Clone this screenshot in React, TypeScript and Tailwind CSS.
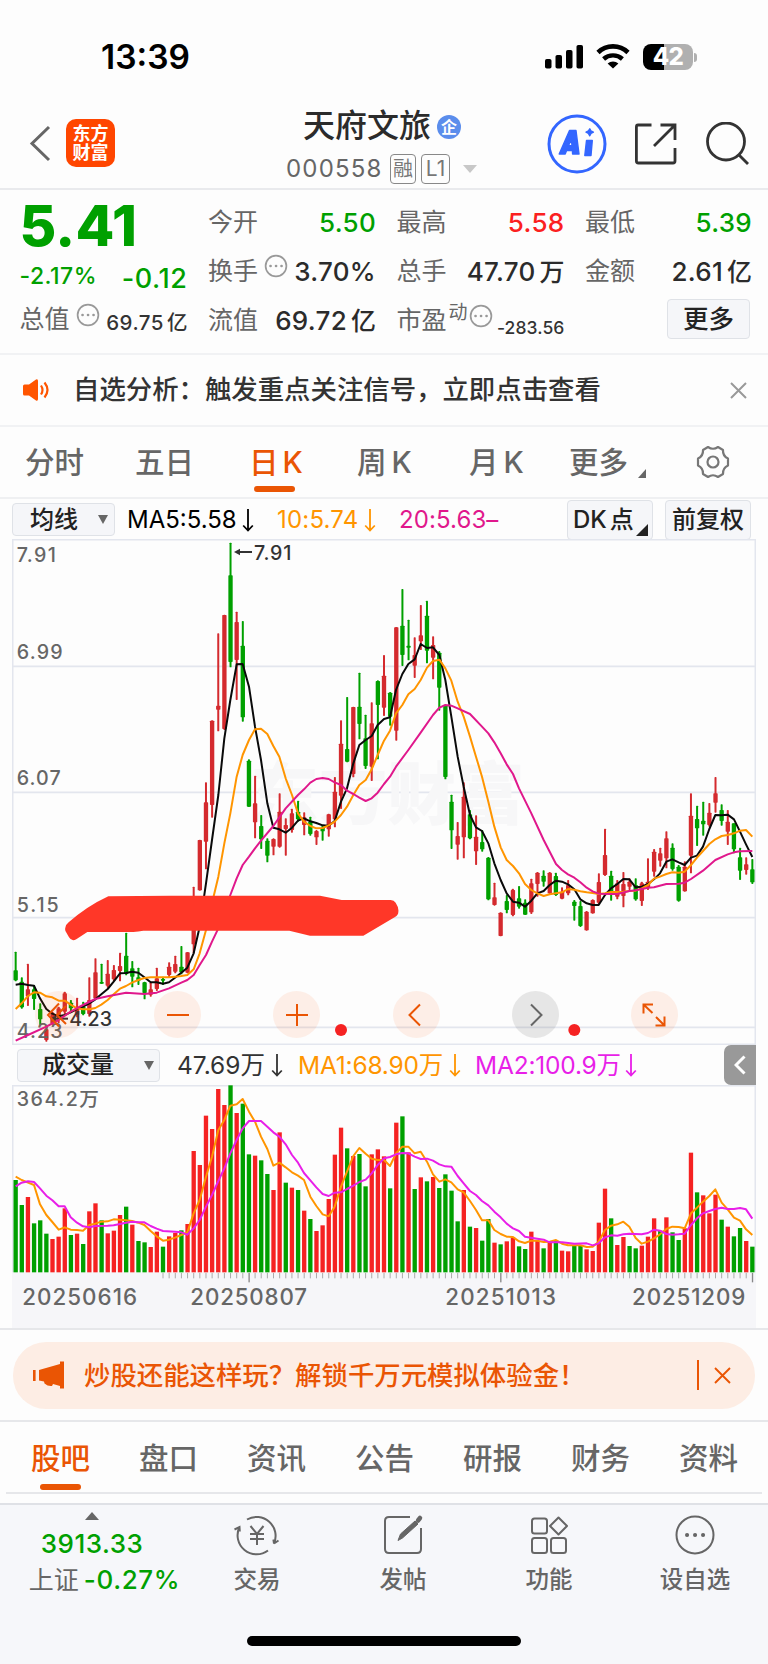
import type { ReactNode } from 'react';

type Candle = [string, number, number, number, number];

// color, high, body top, body bottom, low
const candles: Candle[] = [
  ['g', 1265, 1321, 1351, 1354], ['g', 1342, 1355, 1432, 1436], ['r', 1301, 1378, 1399, 1428], ['g', 1365, 1378, 1407, 1440],
  ['g', 1420, 1437, 1468, 1485], ['r', 1490, 1498, 1530, 1535], ['r', 1445, 1450, 1480, 1485], ['r', 1430, 1435, 1470, 1480],
  ['r', 1385, 1390, 1445, 1452], ['g', 1410, 1418, 1435, 1445], ['r', 1403, 1432, 1455, 1462], ['g', 1415, 1430, 1452, 1456],
  ['r', 1342, 1410, 1452, 1460], ['r', 1285, 1327, 1405, 1410], ['g', 1301, 1356, 1361, 1362], ['r', 1290, 1331, 1367, 1373],
  ['r', 1305, 1320, 1348, 1354], ['r', 1268, 1308, 1323, 1354], ['g', 1208, 1277, 1332, 1336], ['g', 1293, 1315, 1340, 1372],
  ['g', 1313, 1342, 1352, 1365], ['g', 1355, 1357, 1389, 1408], ['r', 1358, 1378, 1394, 1400], ['r', 1313, 1345, 1377, 1383],
  ['g', 1340, 1347, 1352, 1365], ['r', 1297, 1310, 1335, 1342], ['r', 1277, 1302, 1325, 1330], ['g', 1248, 1310, 1327, 1333],
  ['r', 1266, 1267, 1328, 1330], ['r', 1070, 1180, 1243, 1270], ['r', 929, 930, 1081, 1082], ['r', 757, 817, 935, 1018],
  ['r', 571, 572, 825, 863], ['r', 310, 527, 539, 604], ['r', 254, 255, 597, 600], ['g', 38, 136, 396, 412],
  ['r', 245, 276, 390, 510], ['g', 273, 347, 562, 575], ['g', 688, 692, 830, 831], ['r', 737, 820, 877, 925],
  ['g', 855, 888, 928, 957], ['g', 925, 932, 977, 997], ['r', 925, 927, 950, 976], ['r', 790, 845, 950, 953],
  ['r', 865, 885, 897, 977], ['r', 836, 850, 900, 908], ['g', 812, 845, 868, 875], ['r', 847, 862, 885, 916],
  ['g', 860, 875, 912, 917], ['r', 900, 903, 922, 945], ['g', 887, 893, 904, 932], ['r', 851, 853, 898, 920],
  ['r', 741, 785, 868, 892], ['r', 571, 641, 797, 837], ['g', 501, 657, 695, 697], ['r', 530, 531, 732, 742],
  ['g', 428, 530, 582, 628], ['g', 554, 625, 708, 717], ['r', 517, 580, 710, 753], ['g', 451, 453, 525, 688],
  ['r', 375, 437, 533, 558], ['g', 486, 488, 560, 587], ['r', 291, 292, 602, 632], ['g', 177, 287, 375, 408],
  ['g', 269, 347, 353, 391], ['r', 322, 375, 407, 444], ['r', 225, 316, 334, 360], ['g', 212, 257, 362, 400],
  ['r', 319, 345, 383, 448], ['g', 363, 368, 473, 542], ['g', 525, 527, 741, 748], ['g', 794, 815, 901, 957],
  ['r', 876, 918, 944, 989], ['r', 757, 800, 922, 985], ['g', 840, 853, 925, 928], ['r', 856, 920, 964, 1005],
  ['g', 900, 936, 958, 965], ['g', 981, 983, 1108, 1111], ['r', 1058, 1102, 1125, 1127], ['r', 1147, 1148, 1218, 1219],
  ['g', 1095, 1113, 1140, 1150], ['r', 1076, 1080, 1155, 1159], ['g', 1068, 1105, 1130, 1136], ['g', 1108, 1118, 1154, 1155],
  ['r', 1046, 1060, 1147, 1152], ['r', 1026, 1028, 1062, 1100], ['g', 1021, 1037, 1055, 1070], ['r', 1026, 1028, 1090, 1092],
  ['g', 1028, 1038, 1095, 1098], ['r', 1072, 1085, 1106, 1108], ['r', 1050, 1065, 1090, 1096], ['g', 1110, 1115, 1128, 1172],
  ['g', 1113, 1128, 1188, 1191], ['r', 1143, 1145, 1201, 1202], ['r', 1108, 1110, 1150, 1151], ['r', 1030, 1056, 1118, 1125],
  ['r', 896, 975, 1035, 1038], ['g', 1022, 1037, 1090, 1112], ['r', 1050, 1060, 1100, 1108], ['r', 1026, 1062, 1098, 1132],
  ['r', 1045, 1055, 1070, 1080], ['g', 1045, 1065, 1108, 1112], ['r', 1055, 1060, 1113, 1128], ['r', 985, 1055, 1072, 1080],
  ['r', 957, 965, 1025, 1040], ['r', 953, 970, 992, 1010], ['r', 904, 925, 985, 1015], ['g', 940, 953, 1017, 1022],
  ['g', 1005, 1010, 1112, 1115], ['r', 994, 1010, 1084, 1085], ['r', 790, 857, 977, 1030], ['g', 827, 867, 895, 948],
  ['g', 815, 872, 883, 917], ['r', 819, 848, 885, 890], ['r', 741, 790, 818, 848], ['g', 823, 840, 873, 887],
  ['r', 840, 875, 905, 945], ['g', 880, 880, 958, 970], ['g', 953, 982, 1022, 1050], ['r', 982, 1003, 1020, 1034],
  ['g', 987, 1018, 1057, 1062],
];

const volumes =
  'g315 g390 r366 g445 g436 g476 r492 r485 r400 g480 r476 g507 r409 r385 g436 r475 r467 r420 g395 r449 g498 g502 r516 r470 g515 r484 r474 g466 r447 r228 r270 r122 r162 r42 r90 g31 r114 g86 g238 r242 g256 g297 r345 r172 g323 r338 g345 r407 g432 r468 r451 r372 r239 r158 g220 r243 g237 g334 r238 r223 r244 g340 r143 g124 r232 g342 r307 g319 r306 g339 g298 g347 g439 r345 g455 r459 g497 g432 r503 g508 r499 r487 g514 g522 r470 r498 g520 r500 g495 r527 r529 g510 g510 r523 r528 r443 r341 g430 r510 r486 g513 g520 r512 r485 r430 g467 r427 g472 g495 r460 r233 g352 r361 r415 r359 g434 r455 g484 g459 r498 g515'.split(' ');

const ma5 =
  '47,1364 65,1361 84,1365 102,1367 120,1405 139,1437 157,1451 176,1459 194,1455 212,1447 231,1437 249,1430 268,1420 286,1408 304,1393 323,1377 341,1355 360,1330 378,1329 396,1325 415,1328 433,1342 452,1357 470,1357 489,1361 507,1357 525,1343 544,1328 562,1313 581,1270 599,1190 618,1060 636,930 655,795 673,625 691,510 710,403 728,402 747,470 765,590 783,690 802,820 820,893 838,898 857,908 876,893 894,872 912,865 931,874 949,879 968,886 986,887 1004,873 1023,815 1041,775 1060,700 1078,645 1097,630 1115,618 1133,585 1152,567 1170,562 1188,480 1207,432 1225,402 1244,388 1262,342 1281,354 1299,352 1318,375 1336,450 1354,560 1373,680 1391,770 1410,855 1428,892 1446,903 1465,940 1483,1000 1502,1050 1520,1090 1539,1115 1557,1118 1575,1130 1594,1112 1612,1090 1631,1083 1649,1065 1668,1052 1686,1055 1704,1063 1723,1078 1741,1108 1760,1120 1778,1125 1796,1125 1815,1095 1833,1075 1852,1062 1870,1047 1888,1048 1907,1072 1925,1070 1944,1062 1962,1048 1980,1030 1999,995 2017,988 2036,997 2054,1005 2073,983 2091,977 2109,950 2128,897 2146,855 2165,856 2183,854 2202,868 2220,905 2238,943 2257,981';
const ma10 =
  '47,1437 65,1420 84,1398 102,1387 120,1388 139,1399 157,1402 176,1412 194,1412 212,1424 231,1435 249,1438 268,1438 286,1434 304,1424 323,1410 341,1393 360,1376 378,1368 396,1358 415,1350 433,1344 452,1342 470,1342 489,1342 507,1342 525,1340 544,1338 562,1335 581,1318 599,1270 618,1200 636,1120 655,1040 673,940 691,850 710,740 728,675 747,630 765,598 783,596 802,612 820,648 838,680 857,745 876,795 894,850 912,875 931,888 949,895 968,894 986,886 1004,875 1023,855 1041,830 1060,795 1078,765 1097,750 1115,718 1133,675 1152,632 1170,602 1188,550 1207,525 1225,493 1244,477 1262,450 1281,413 1299,393 1318,389 1336,415 1354,452 1373,515 1391,560 1410,620 1428,680 1446,740 1465,815 1483,890 1502,952 1520,990 1539,1008 1557,1030 1575,1062 1594,1080 1612,1090 1631,1098 1649,1093 1668,1090 1686,1087 1704,1077 1723,1079 1741,1084 1760,1087 1778,1089 1796,1092 1815,1090 1833,1086 1852,1086 1870,1085 1888,1083 1907,1082 1925,1075 1944,1065 1962,1046 1980,1040 1999,1032 2017,1027 2036,1028 2054,1025 2073,1005 2091,983 2109,963 2128,942 2146,928 2165,918 2183,915 2202,910 2220,902 2238,900 2257,920';
const ma20 =
  '47,1532 84,1515 139,1490 176,1470 212,1445 249,1425 286,1407 323,1399 378,1388 433,1392 470,1388 507,1375 544,1358 562,1350 581,1335 599,1305 618,1275 636,1235 655,1195 673,1140 691,1095 710,1045 728,1005 747,980 765,955 783,932 820,888 857,835 894,795 912,778 931,758 949,747 968,744 986,747 1004,757 1023,765 1041,782 1060,792 1078,803 1097,813 1115,805 1133,788 1152,762 1170,740 1188,710 1225,660 1262,608 1299,555 1318,533 1336,525 1354,527 1373,535 1410,552 1446,590 1465,610 1483,637 1502,670 1520,703 1539,732 1557,775 1594,850 1631,930 1668,1002 1686,1020 1704,1033 1723,1043 1741,1057 1760,1073 1778,1084 1796,1091 1833,1092 1852,1092 1888,1083 1907,1081 1944,1073 1962,1072 1999,1062 2036,1061 2054,1058 2073,1047 2109,1022 2146,990 2183,973 2202,967 2220,964 2257,963';
const volMa1 =
  '47,305 65,315 84,323 102,330 120,388 139,420 157,441 176,464 194,457 212,464 231,465 249,467 268,450 286,446 304,440 323,439 341,433 360,434 378,436 396,438 415,443 433,450 452,468 470,484 489,497 507,494 525,488 544,480 562,472 581,415 599,375 618,305 636,245 655,165 673,135 691,92 710,88 728,72 747,110 765,140 783,185 802,222 820,272 838,263 857,277 876,292 894,302 912,315 931,365 949,393 968,418 986,424 1004,395 1023,335 1041,290 1060,243 1078,219 1097,236 1115,251 1133,255 1152,255 1170,273 1188,235 1207,215 1225,215 1244,235 1262,230 1281,260 1299,298 1318,320 1336,313 1354,322 1373,343 1391,352 1410,378 1428,405 1446,436 1465,436 1483,465 1502,477 1520,485 1539,486 1557,499 1575,504 1594,497 1612,497 1631,501 1649,500 1668,495 1686,506 1704,511 1723,511 1741,511 1760,516 1778,515 1796,500 1815,465 1833,452 1852,448 1870,440 1888,455 1907,489 1925,506 1944,500 1962,490 1980,478 1999,462 2017,455 2036,456 2054,460 2073,415 2091,398 2109,380 2128,363 2146,343 2165,383 2183,403 2202,428 2220,437 2238,463 2257,480';
const volMa2 =
  '47,334 65,323 84,319 102,321 120,340 139,362 157,376 176,394 194,394 212,427 231,443 249,454 268,457 286,453 323,452 341,451 360,447 378,443 396,440 415,442 433,442 452,453 470,461 489,468 525,470 544,472 562,479 581,460 599,435 618,395 636,360 655,318 673,280 691,235 710,195 728,160 747,138 783,138 802,155 820,172 838,185 857,208 876,240 894,263 912,294 931,316 949,337 968,357 986,363 1004,353 1023,352 1041,342 1060,332 1078,321 1097,314 1115,295 1133,270 1152,250 1170,246 1188,238 1207,234 1225,235 1244,245 1262,252 1281,251 1299,257 1318,268 1336,274 1354,275 1373,303 1391,325 1410,348 1428,360 1446,378 1465,391 1483,410 1502,427 1520,446 1539,460 1557,468 1575,485 1612,491 1631,494 1649,502 1686,502 1723,506 1760,505 1778,511 1796,505 1815,487 1833,481 1852,482 1870,478 1888,476 1925,478 1944,474 1962,464 1980,467 1999,477 2017,479 2036,478 2054,476 2073,450 2091,430 2109,415 2128,408 2146,402 2165,398 2183,402 2202,402 2220,399 2238,403 2257,431';

const barX = (i: number) => 47 + i * 18.417;

function StatusBar() {
  return (
    <div className="flex h-[96px] items-start justify-between pl-[101px] pr-[71px] pt-[43px]">
      <span className="text-[33.5px] font-semibold leading-[28px] text-black">13:39</span>
      <div className="flex">
        <svg width="40" height="28" viewBox="0 0 40 28" className="mr-[11px]">
          <rect x="0" y="16" width="6.5" height="9.5" rx="1.8" />
          <rect x="10.5" y="12" width="6.5" height="13.5" rx="1.8" />
          <rect x="21" y="7" width="6.5" height="18.5" rx="1.8" />
          <rect x="31.5" y="2" width="6.5" height="23.5" rx="1.8" />
        </svg>
        <svg width="34" height="28" viewBox="0 0 34 28" className="mr-[13px]">
          <path d="M2 9.5 A21.5 21.5 0 0 1 32 9.5" fill="none" stroke="#000" strokeWidth="4.6" />
          <path d="M7.6 16 A14 14 0 0 1 26.4 16" fill="none" stroke="#000" strokeWidth="4.4" />
          <path d="M17 25.6 L11.6 20.6 A8 8 0 0 1 22.4 20.6 Z" />
        </svg>
        <div className="flex items-center">
          <div className="flex h-[26px] w-[50px] items-center justify-center rounded-[8px] bg-[linear-gradient(90deg,#000_42%,#b0b0b0_42%)] text-[24px] font-extrabold leading-none tracking-[-0.6px] text-white">
            42
          </div>
          <div className="ml-[1px] h-[9px] w-[3px] rounded-r-full bg-[#b0b0b0]" />
        </div>
      </div>
    </div>
  );
}

function Header() {
  return (
    <div className="relative flex h-[94px] items-start border-b-2 border-[#e9eaed]">
      <svg width="24" height="38" viewBox="0 0 24 38" className="ml-[28px] mt-[29px]" fill="none" stroke="#666" strokeWidth="3">
        <path d="M21 2 L4 18.5 L21 35" />
      </svg>
      <div className="ml-[14px] mt-[23px] flex h-[48px] w-[49px] flex-col items-center justify-center rounded-[10px] bg-[#ff4600] text-[18px] font-bold leading-[19.5px] text-white">
        <span>东方</span>
        <span>财富</span>
      </div>
      <div className="absolute left-[286px] top-[9px] w-[200px]">
        <div className="flex h-[42px] items-center pl-[17px]">
          <span className="text-[32px] font-medium text-[#2b2b2b]">天府文旅</span>
          <span className="ml-[6px] mt-[1px] flex h-[24px] w-[24px] items-center justify-center rounded-full bg-[#5b8dec] text-[16px] font-bold text-white">企</span>
        </div>
        <div className="mt-[5px] flex h-[34px] items-center">
          <span className="w-[104px] text-[24px] tracking-[1.2px] text-[#666]">000558</span>
          <span className="flex h-[30px] w-[26px] items-center justify-center rounded-[4px] border-[1.5px] border-[#888] text-[20px] text-[#777]">融</span>
          <span className="ml-[5px] flex h-[30px] w-[29px] items-center justify-center rounded-[4px] border-[1.5px] border-[#888] text-[21px] text-[#777]">L1</span>
          <svg width="14" height="8" viewBox="0 0 14 8" className="ml-[13px]">
            <path d="M0 0 H14 L7 8 Z" fill="#c8c8c8" />
          </svg>
        </div>
      </div>
      <div className="ml-auto mr-[17px] mt-[17.5px] flex items-center">
        <svg width="60" height="60" viewBox="0 0 60 60" className="mr-[27px]">
          <circle cx="30" cy="30" r="28" fill="none" stroke="#3366ff" strokeWidth="3" />
          <g fill="#3366ff" stroke="#3366ff" strokeWidth="1.4" strokeLinejoin="round">
            <path fillRule="evenodd" d="M22.5 16.5 H29 L32 40 H25.6 L25.4 36.5 H19.6 L18.2 40 H12.2 Z M24.4 25.5 L21.4 31.8 H25 Z" />
            <path d="M39.5 26.5 H45.3 L44 41.5 H37.8 Z" />
            <path d="M42.8 14.8 L44 17 L46.4 18.2 L44 19.4 L42.8 21.8 L41.4 19.4 L39 18.2 L41.4 17 Z" />
          </g>
        </svg>
        <svg width="44" height="44" viewBox="0 0 44 44" className="mr-[27px]" fill="none" stroke="#333" strokeWidth="2.8">
          <path d="M17.5 3 H4 Q2.4 3 2.4 5 V39 Q2.4 41 4.4 41 H39 Q41 41 41 39 V26" />
          <path d="M26.5 3 H41 V18 M41 3 L20 24" />
        </svg>
        <svg width="46" height="46" viewBox="0 0 46 46" className="mt-[2px]" fill="none" stroke="#333" strokeWidth="2.8">
          <circle cx="21" cy="19.5" r="18.5" />
          <path d="M33.5 32.5 L43 42" />
        </svg>
      </div>
    </div>
  );
}

function InfoDot() {
  return (
    <svg width="24" height="24" viewBox="0 0 24 24" fill="none" stroke="#999" strokeWidth="1.7">
      <circle cx="12" cy="12" r="10.4" />
      <path d="M6.5 12h.1M12 12h.1M17.5 12h.1" strokeWidth="2.6" strokeLinecap="round" />
    </svg>
  );
}

function Stat({ label, value, unit, color = 'text-[#2b2b2b]', dot }: { label: string; value: string; unit?: string; color?: string; dot?: boolean }) {
  return (
    <div className="relative flex h-[49px] items-center justify-between text-[25px] text-[#666]">
      <span>{label}</span>
      {dot && <span className="absolute left-[56px] top-[7px]"><InfoDot /></span>}
      <span className={`text-[26px] font-medium tracking-[0.3px] ${color}`}>
        {value}
        {unit && <span className="ml-[4px] text-[25px] tracking-normal">{unit}</span>}
      </span>
    </div>
  );
}

function Quote() {
  return (
    <div className="grid h-[165px] grid-cols-[168px_168px_168px_167px] gap-x-[20.5px] border-b-2 border-[#f1f2f4] pl-[19.5px] pt-[8px]">
      <div>
        <div className="h-[57px] text-[56.5px] font-extrabold leading-[56px] tracking-[0.2px] text-[#00a000]">5.41</div>
        <div className="flex h-[40px] items-baseline justify-between font-medium text-[#00a000]">
          <span className="text-[23px] leading-[36px] tracking-[0.5px]">-2.17%</span>
          <span className="relative top-[4px] text-[27px] tracking-[0.6px]">-0.12</span>
        </div>
        <div className="relative flex h-[49px] items-center justify-between text-[25px] text-[#666]">
          <span>总值</span>
          <span className="absolute left-[56px] top-[8px]"><InfoDot /></span>
          <span className="mt-[8px] text-[20.5px] font-medium tracking-[0.5px] text-[#333]">69.75<span className="ml-[3px] tracking-normal">亿</span></span>
        </div>
      </div>
      <div>
        <Stat label="今开" value="5.50" color="text-[#00a000]" />
        <Stat label="换手" value="3.70%" dot />
        <Stat label="流值" value="69.72" unit="亿" />
      </div>
      <div>
        <Stat label="最高" value="5.58" color="text-[#fb2020]" />
        <Stat label="总手" value="47.70" unit="万" />
        <div className="relative flex h-[49px] items-center justify-between text-[25px] text-[#666]">
          <span>市盈</span>
          <span className="absolute left-[52px] top-[3px] text-[19px]">动</span>
          <span className="absolute left-[72px] top-[8px]"><InfoDot /></span>
          <span className="mt-[15px] text-[17.5px] font-medium tracking-[0.1px] text-[#333]">-283.56</span>
        </div>
      </div>
      <div>
        <Stat label="最低" value="5.39" color="text-[#00a000]" />
        <Stat label="金额" value="2.61" unit="亿" />
        <div className="ml-auto mr-[2px] mt-[3px] flex h-[40px] w-[83px] items-center justify-center rounded-[4px] border-[1.5px] border-[#dfe2e7] bg-[#f5f6f9] text-[25.5px] font-medium text-[#222]">
          更多
        </div>
      </div>
    </div>
  );
}

function Notice() {
  return (
    <div className="flex h-[72px] items-center border-b-2 border-[#f1f2f4] pl-[22px] pr-[21px]">
      <svg width="28" height="24" viewBox="0 0 28 24">
        <path d="M2.5 6.5 H7 L14 1.5 Q16 .5 16 3 V21 Q16 23.5 14 22.5 L7 17.5 H2.5 Q1 17.5 1 16 V8 Q1 6.5 2.5 6.5 Z" fill="#ff5500" />
        <path d="M19 7.5 Q22 12 19 16.5 M22.5 4.5 Q28.5 12 22.5 19.5" fill="none" stroke="#ff5500" strokeWidth="2.2" />
      </svg>
      <span className="ml-[23px] text-[26.4px] font-medium text-[#333]">自选分析：触发重点关注信号，立即点击查看</span>
      <svg width="17" height="17" viewBox="0 0 17 17" className="ml-auto" stroke="#999" strokeWidth="2">
        <path d="M1 1 L16 16 M16 1 L1 16" />
      </svg>
    </div>
  );
}

function PeriodTabs() {
  return (
    <div className="flex h-[72px] items-center border-b-2 border-[#eff0f2] pl-[25px] text-[29.5px] font-medium text-[#666]">
      <span className="w-[110px]">分时</span>
      <span className="w-[114px]">五日</span>
      <span className="relative w-[108px] text-[#ea5504]">
        日<span className="ml-[4px]">K</span>
        <i className="absolute -bottom-[8px] left-[5px] h-[6px] w-[41px] rounded-[3px] bg-[#ea5504]" />
      </span>
      <span className="w-[112px]">周<span className="ml-[5px]">K</span></span>
      <span className="w-[100px]">月<span className="ml-[5px]">K</span></span>
      <span>更多</span>
      <svg width="8" height="9" viewBox="0 0 8 9" className="ml-[10px] mt-[22px]">
        <path d="M8 0 V9 H0 Z" fill="#666" />
      </svg>
      <svg width="36" height="36" viewBox="0 0 36 36" className="ml-[49px]" fill="none" stroke="#777" strokeWidth="2.2" strokeLinejoin="round">
        <path d="M13 3 Q18 6.5 23 3 L28 6 Q27.6 12 33 14.5 V21.5 Q27.6 24 28 30 L23 33 Q18 29.5 13 33 L8 30 Q8.4 24 3 21.5 V14.5 Q8.4 12 8 6 Z" />
        <circle cx="18" cy="18" r="5.5" />
      </svg>
    </div>
  );
}

function DownArrow() {
  return (
    <svg width="12" height="26" viewBox="0 0 12 26" fill="none" stroke="currentColor" strokeWidth="1.8">
      <path d="M6 2 V23.5 M1.2 18.5 L6 23.5 L10.8 18.5" />
    </svg>
  );
}

function SelectBox({ label, className }: { label: string; className: string }) {
  return (
    <div className={`flex items-center justify-between rounded-[4px] border-[1.5px] border-[#dfe2e7] bg-[#f5f6f9] text-[24px] font-medium text-[#222] ${className}`}>
      <span>{label}</span>
      <svg width="10" height="9" viewBox="0 0 10 9"><path d="M0 0 H10 L5 9 Z" fill="#666" /></svg>
    </div>
  );
}

function MaBar() {
  return (
    <div className="flex h-[40px] items-center pl-[12px] pt-[1px] text-[24px] leading-none">
      <SelectBox label="均线" className="h-[33px] w-[103px] pl-[17px] pr-[6px]" />
      <div className="ml-[12px] flex w-[127px] items-center justify-between text-black">
        <span>MA5:5.58</span>
        <DownArrow />
      </div>
      <div className="ml-[23px] flex w-[99px] items-center justify-between text-[#ff9500]">
        <span className="tracking-[0.2px]">10:5.74</span>
        <DownArrow />
      </div>
      <span className="ml-[23px] w-[168px] tracking-[0.1px] text-[#e0188c]">20:5.63–</span>
      <div className="relative flex h-[40px] w-[86px] items-center rounded-[4px] border-[1.5px] border-[#dfe2e7] bg-[#f5f6f9] pl-[5px] font-medium text-[#222]">
        DK<span className="ml-[3px]">点</span>
        <svg width="12" height="12" viewBox="0 0 12 12" className="absolute bottom-[3px] right-[4px]"><path d="M12 0 V12 H0 Z" fill="#222" /></svg>
      </div>
      <div className="ml-[12px] flex h-[40px] w-[86px] items-center justify-center rounded-[4px] border-[1.5px] border-[#dfe2e7] bg-[#f5f6f9] font-medium text-[#222]">前复权</div>
    </div>
  );
}

function RoundButton({ children, gray }: { children: ReactNode; gray?: boolean }) {
  return (
    <button className={`flex h-[47px] w-[47px] items-center justify-center rounded-full ${gray ? 'bg-[#666]/15 text-[#666]' : 'bg-[#ff5a0a]/9 text-[#ea5504]'}`}>
      <svg width="26" height="26" viewBox="0 0 26 26" fill="none" stroke="currentColor" strokeWidth="2">{children}</svg>
    </button>
  );
}

function PriceChart() {
  return (
    <div className="relative mx-[12px] h-[506px]">
      <svg width="744" height="506" viewBox="36 27 2232 1518">
        <g stroke="#e3e6ee" strokeWidth="5" fill="none">
          <rect x="38" y="29" width="2228" height="1514" />
          <path d="M38 409 H2266 M38 787 H2266 M38 1163 H2266 M38 1492 H2266" />
        </g>
        <text x="750" y="868" fontSize="206" fontWeight="900" fill="#f7f7f8">东方财富</text>
        {candles.map(([c, hi, top, bot, lo], i) => (
          <g key={i} fill={c === 'g' ? '#00a000' : '#d42a2e'}>
            <rect x={barX(i) - 3} y={hi} width="6" height={lo - hi} rx="2" />
            <rect x={barX(i) - 6.5} y={top} width="13" height={Math.max(bot - top, 5)} rx="2" />
          </g>
        ))}
        <g fontSize="59" fontWeight="500" fill="#666">
          <text x="50" y="95" textLength="118">7.91</text>
          <text x="50" y="388" textLength="138">6.99</text>
          <text x="50" y="766" textLength="132">6.07</text>
          <text x="50" y="1146" textLength="126">5.15</text>
          <text x="50" y="1525" textLength="138">4.23</text>
        </g>
        <g fontSize="59" fontWeight="500" fill="#333">
          <text x="762" y="89" textLength="112">7.91</text>
          <text x="208" y="1487" textLength="128">4.23</text>
        </g>
        <path d="M712 66 H756" stroke="#333" strokeWidth="6" />
        <path d="M702 66 L720 56 V76 Z" fill="#333" />
        <path d="M160 1466 H204" stroke="#333" strokeWidth="6" />
        <path d="M150 1466 L168 1456 V1476 Z" fill="#333" />
        <g fill="none" strokeWidth="6" strokeLinejoin="round">
          <polyline points={ma5} stroke="#0a0a0a" />
          <polyline points={ma10} stroke="#ff9500" />
          <polyline points={ma20} stroke="#e0188c" />
        </g>
        <path
          d="M196 1193 Q197 1184 206 1177 Q262 1128 325 1099 L510 1097 H960 L1025 1110 H1172 Q1182 1110 1187 1118 Q1197 1133 1195 1146 Q1195 1155 1185 1161 L1090 1217 H930 L868 1202 H430 Q415 1205 400 1206 H262 L230 1227 Q215 1236 207 1222 L198 1206 Q194 1200 196 1193 Z"
          fill="#ff3728"
        />
        <circle cx="1023" cy="1500" r="18" fill="#f52222" />
        <circle cx="1723" cy="1500" r="18" fill="#f52222" />
      </svg>
      <div className="absolute left-[23px] top-[452px] flex gap-[72.2px]">
        <RoundButton><path d="M13 1.5 L2 13 L13 24.5 M20 4 L11 13 L20 22" /></RoundButton>
        <RoundButton><path d="M2 13 H24" /></RoundButton>
        <RoundButton><path d="M2 13 H24 M13 2 V24" /></RoundButton>
        <RoundButton><path d="M17 2.5 L6.5 13 L17 23.5" /></RoundButton>
        <RoundButton gray><path d="M9 2.5 L19.5 13 L9 23.5" /></RoundButton>
        <RoundButton><path d="M12 2.5 H2.5 V11.5 M2.5 2.5 L11.5 11 M14.5 23.5 H23.5 V14.5 M23.5 23.5 L15 15" /></RoundButton>
      </div>
    </div>
  );
}

function VolumeChart() {
  return (
    <div className="mx-[12px]">
      <div className="flex h-[40px] items-center pl-[5px] text-[24.5px] leading-none">
        <SelectBox label="成交量" className="h-[33px] w-[143px] pl-[24px] pr-[5px]" />
        <div className="ml-[17px] flex w-[106px] items-center justify-between text-[#333]">
          <span>47.69万</span>
          <DownArrow />
        </div>
        <div className="ml-[15px] flex w-[163px] items-center justify-between whitespace-nowrap text-[#ff9500]">
          <span className="tracking-[-0.2px]">MA1:68.90万</span>
          <DownArrow />
        </div>
        <div className="ml-[14px] flex w-[162px] items-center justify-between whitespace-nowrap text-[#e81fe8]">
          <span className="tracking-[-0.2px]">MA2:100.9万</span>
          <DownArrow />
        </div>
        <div className="ml-auto flex h-[40px] w-[32px] items-center justify-center rounded-l-[7px] bg-[#999]">
          <svg width="12" height="20" viewBox="0 0 12 20" fill="none" stroke="#fff" strokeWidth="3"><path d="M10.5 1.5 L2 10 L10.5 18.5" /></svg>
        </div>
      </div>
      <svg width="744" height="243" viewBox="36 30 2232 729">
        <rect x="36" y="592" width="2232" height="167" fill="#f6f6f9" />
        <path d="M38 592 V32 H2266 V592" fill="none" stroke="#e3e6ee" strokeWidth="5" />
        {volumes.map((v, i) => (
          <rect key={i} x={barX(i) - 6.5} y={Number(v.slice(1))} width="13" height={592 - Number(v.slice(1))} fill={v[0] === 'g' ? '#00a000' : '#f52222'} />
        ))}
        {volumes.map((_, i) => {
          const major = i === 38 || i === 79 || i === 120;
          if (i < 24) return null;
          return <rect key={i} x={barX(i) - 1.5} y="594" width={major ? 4 : 3} height={major ? 28 : 16} fill={major ? '#888' : '#aaa'} />;
        })}
        <g fill="none" strokeWidth="6" strokeLinejoin="round">
          <polyline points={volMa1} stroke="#ff9500" />
          <polyline points={volMa2} stroke="#e81fe8" />
        </g>
        <g fontWeight="500" fill="#666">
          <text x="50" y="94" fontSize="59" textLength="247">364.2万</text>
          <g fontSize="67">
            <text x="67" y="689" textLength="344">20250616</text>
            <text x="571" y="689" textLength="350">20250807</text>
            <text x="1336" y="689" textLength="332">20251013</text>
            <text x="1896" y="689" textLength="340">20251209</text>
          </g>
        </g>
      </svg>
    </div>
  );
}

function PromoBanner() {
  return (
    <div className="flex h-[94px] items-center border-y-2 border-[#e6e7ea] px-[13px]">
      <div className="flex h-[67px] flex-1 items-center rounded-[33px] bg-[#fdede4] pl-[19px] pr-[24px] text-[#ea5504]">
        <svg width="34" height="28" viewBox="0 0 34 28" fill="#ea5504">
          <path d="M1 9 H3.6 V20 H1 Z M7 9 L28 3 V0.5 H32 V27.5 H28 V25 L21 23 L20 25 Q16 25.5 12.5 22.5 L12 20.5 L7 19.5 Z" />
        </svg>
        <span className="ml-[18px] mt-[1px] text-[26.4px] font-medium">炒股还能这样玩？解锁千万元模拟体验金！</span>
        <i className="ml-auto h-[30px] w-[2px] bg-[#ea5504]" />
        <svg width="17" height="17" viewBox="0 0 17 17" className="ml-[15px]" stroke="currentColor" strokeWidth="1.9">
          <path d="M1 1 L16 16 M16 1 L1 16" />
        </svg>
      </div>
    </div>
  );
}

const tabs = ['股吧', '盘口', '资讯', '公告', '研报', '财务', '资料'];

function ContentTabs() {
  return (
    <div className="mx-[6px] flex h-[72px] gap-[49px] border-b-2 border-[#e6e7ea] pl-[25px] text-[29.5px] font-medium text-[#666]">
      {tabs.map((t, i) => (
        <div key={t} className={`relative flex h-[72px] w-[59px] items-center justify-center whitespace-nowrap ${i === 0 ? 'text-[#ea5504]' : ''}`}>
          {t}
          {i === 0 && <i className="absolute bottom-[4px] left-[9px] h-[6px] w-[41px] rounded-[3px] bg-[#ea5504]" />}
        </div>
      ))}
    </div>
  );
}

function NavItem({ label, children }: { label: string; children: ReactNode }) {
  return (
    <div className="flex w-[146px] flex-col items-center text-[23.5px] font-medium text-[#666]">
      <svg width="44" height="44" viewBox="0 0 44 44" className="mt-[8px] overflow-visible" fill="none" stroke="#666" strokeWidth="2">{children}</svg>
      <span className="mt-[5px]">{label}</span>
    </div>
  );
}

function BottomNav() {
  return (
    <div className="mt-[9px] h-[161px] border-t-2 border-[#dfe1e6] bg-[#f6f7fa]">
      <div className="flex h-[131px]">
        <div className="flex w-[184px] flex-col items-center font-medium text-[#00a000]">
          <svg width="14" height="8" viewBox="0 0 14 8" className="mt-[7px]"><path d="M7 0 L14 8 H0 Z" fill="#666" /></svg>
          <div className="mt-[8px] text-[26px] leading-[32px] tracking-[0.5px]">3913.33</div>
          <div className="ml-[25px] mt-[4px] flex items-center whitespace-nowrap text-[26px] leading-[32px] tracking-[0.6px]">
            <span className="mr-[5px] text-[25px] font-normal tracking-normal text-[#666]">上证</span>-0.27%
          </div>
        </div>
        <NavItem label="交易">
          <path d="M12 6.5 A19 19 0 0 1 39 30.5 M39 30.5 L38.4 26.5 M39 30.5 L43.5 27.5 M33 37.5 A19 19 0 0 1 4.5 14 M-.5 16.5 L4.5 14 L4.8 18.5" />
          <path d="M15.5 13 L22 21 L28.5 13 M22 21 V32 M15 21 H29 M15 26 H29" />
        </NavItem>
        <NavItem label="发帖">
          <path d="M29 4 H8 Q4 4 4 8 V36 Q4 40 8 40 H36 Q40 40 40 36 V15" />
          <path d="M17 27.5 L19.5 21 L34 8 L37 11 L21.5 25 Z" fill="#666" strokeWidth="1" />
          <path d="M37 7.5 L39 5" strokeWidth="4.5" strokeLinecap="round" />
        </NavItem>
        <NavItem label="功能">
          <rect x="5" y="5.5" width="15" height="15" rx="2.5" />
          <rect x="5" y="25" width="15" height="15" rx="2.5" />
          <rect x="24" y="25" width="15" height="15" rx="2.5" />
          <path d="M31.5 4.5 L40 13 L31.5 21.5 L23 13 Z" strokeLinejoin="round" />
        </NavItem>
        <NavItem label="设自选">
          <circle cx="22" cy="22" r="18.5" />
          <path d="M14 22h.1M22 22h.1M30 22h.1" strokeWidth="4" strokeLinecap="round" />
        </NavItem>
      </div>
      <div className="mx-auto h-[10px] w-[274px] rounded-full bg-black" />
    </div>
  );
}

export default function App() {
  return (
    <div className="h-[1664px] w-[768px] overflow-hidden bg-[#fdfdfd] font-['Inter','Noto_Sans_CJK_SC',sans-serif]">
      <StatusBar />
      <Header />
      <Quote />
      <Notice />
      <PeriodTabs />
      <MaBar />
      <PriceChart />
      <VolumeChart />
      <PromoBanner />
      <ContentTabs />
      <BottomNav />
    </div>
  );
}
